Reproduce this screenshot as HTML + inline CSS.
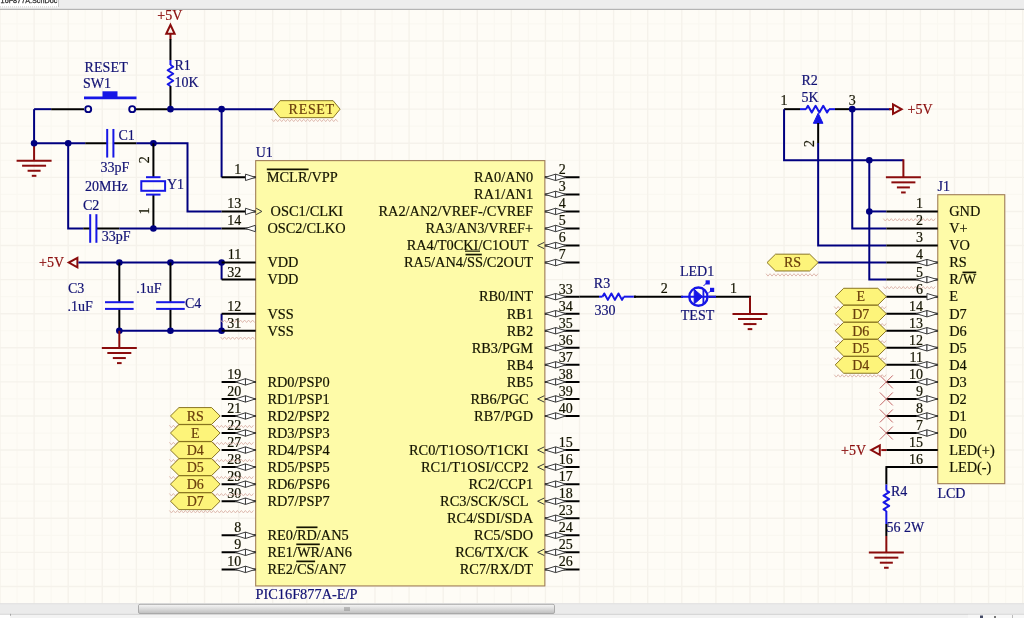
<!DOCTYPE html>
<html><head><meta charset="utf-8"><title>schematic</title>
<style>
html,body{margin:0;padding:0;}
body{width:1024px;height:618px;overflow:hidden;background:#fefcf6;font-family:"Liberation Serif",serif;}
svg{position:absolute;left:0;top:0;display:block;will-change:transform;transform:translateZ(0);}
svg text{font-family:"Liberation Serif",serif;}
.sans{font-family:"Liberation Sans",sans-serif;}
</style></head><body>
<svg width="1024" height="618" viewBox="0 0 1024 618" shape-rendering="auto">
<rect x="0" y="0" width="1024" height="618" fill="#fefcf6"/>
<path d="M17.05 9V604 M51.14 9V604 M85.23 9V604 M119.32 9V604 M153.41 9V604 M187.50 9V604 M221.59 9V604 M255.68 9V604 M289.77 9V604 M323.86 9V604 M357.95 9V604 M392.04 9V604 M426.13 9V604 M460.22 9V604 M494.31 9V604 M528.40 9V604 M562.49 9V604 M596.58 9V604 M630.67 9V604 M664.76 9V604 M698.85 9V604 M732.94 9V604 M767.03 9V604 M801.12 9V604 M835.21 9V604 M869.30 9V604 M903.39 9V604 M937.48 9V604 M971.57 9V604 M1005.66 9V604 M0 23.95H1024 M0 58.04H1024 M0 92.13H1024 M0 126.22H1024 M0 160.31H1024 M0 194.40H1024 M0 228.49H1024 M0 262.57H1024 M0 296.67H1024 M0 330.75H1024 M0 364.85H1024 M0 398.94H1024 M0 433.03H1024 M0 467.12H1024 M0 501.21H1024 M0 535.30H1024 M0 569.38H1024 M0 603.48H1024" stroke="#faf8f1" stroke-width="1.2" fill="none"/>
<path d="M0.00 9V604 M34.09 9V604 M68.18 9V604 M102.27 9V604 M136.36 9V604 M170.45 9V604 M204.54 9V604 M238.63 9V604 M272.72 9V604 M306.81 9V604 M340.90 9V604 M374.99 9V604 M409.08 9V604 M443.17 9V604 M477.26 9V604 M511.35 9V604 M545.44 9V604 M579.53 9V604 M613.62 9V604 M647.71 9V604 M681.80 9V604 M715.89 9V604 M749.98 9V604 M784.07 9V604 M818.16 9V604 M852.25 9V604 M886.34 9V604 M920.43 9V604 M954.52 9V604 M988.61 9V604 M1022.70 9V604 M0 40.99H1024 M0 75.08H1024 M0 109.17H1024 M0 143.26H1024 M0 177.35H1024 M0 211.44H1024 M0 245.53H1024 M0 279.62H1024 M0 313.71H1024 M0 347.80H1024 M0 381.89H1024 M0 415.98H1024 M0 450.07H1024 M0 484.16H1024 M0 518.25H1024 M0 552.34H1024 M0 586.43H1024" stroke="#f5f2eb" stroke-width="1.4" fill="none"/>
<rect x="255.68" y="160.61" width="289.16" height="425.32" fill="#fefba8" stroke="#a07e58" stroke-width="1.1"/>
<rect x="937.78" y="194.70" width="66.98" height="288.96" fill="#fefba8" stroke="#a07e58" stroke-width="1.1"/>
<line x1="170.45" y1="39.49" x2="170.45" y2="33.99" stroke="#8a0c0c" stroke-width="2" stroke-linecap="butt"/>
<polygon points="166.25,33.79 170.45,24.79 174.65,33.79" stroke="#8a0c0c" stroke-width="2" fill="none" stroke-linejoin="miter"/>
<text x="169.75" y="19.99" fill="#8a0c0c" stroke="#8a0c0c" stroke-width="0.2" font-size="14" text-anchor="middle" >+5V</text>
<line x1="170.45" y1="38.99" x2="170.45" y2="60.00" stroke="#000000" stroke-width="2" stroke-linecap="butt"/>
<line x1="170.45" y1="86.00" x2="170.45" y2="109.17" stroke="#000000" stroke-width="2" stroke-linecap="butt"/>
<line x1="170.45" y1="60.00" x2="170.45" y2="65.00" stroke="#1616e6" stroke-width="2" stroke-linecap="butt"/>
<polyline points="170.45,65.00 173.25,66.75 167.65,70.25 173.25,73.75 167.65,77.25 173.25,80.75 167.65,84.25 170.45,86.00" stroke="#1616e6" stroke-width="2" fill="none" stroke-linejoin="round"/>
<text x="174.50" y="69.50" fill="#121274" stroke="#121274" stroke-width="0.2" font-size="14" text-anchor="start" >R1</text>
<text x="174.50" y="86.50" fill="#121274" stroke="#121274" stroke-width="0.2" font-size="14" text-anchor="start" >10K</text>
<line x1="34.09" y1="109.17" x2="51.14" y2="109.17" stroke="#000080" stroke-width="2" stroke-linecap="butt"/>
<line x1="51.14" y1="109.17" x2="84.00" y2="109.17" stroke="#000000" stroke-width="2" stroke-linecap="butt"/>
<line x1="135.00" y1="109.17" x2="170.45" y2="109.17" stroke="#000000" stroke-width="2" stroke-linecap="butt"/>
<line x1="170.45" y1="109.17" x2="272.72" y2="109.17" stroke="#000080" stroke-width="2" stroke-linecap="butt"/>
<circle cx="88.2" cy="109.17" r="3.0" fill="#fefcf6" stroke="#000080" stroke-width="1.9"/>
<circle cx="132.2" cy="109.17" r="3.0" fill="#fefcf6" stroke="#000080" stroke-width="1.9"/>
<line x1="84.00" y1="97.80" x2="136.50" y2="97.80" stroke="#1616e6" stroke-width="2.8" stroke-linecap="butt"/>
<rect x="102.5" y="91.3" width="15" height="6" fill="#1616e6"/>
<text x="84.50" y="72.30" fill="#121274" stroke="#121274" stroke-width="0.2" font-size="14" text-anchor="start" letter-spacing="0.1">RESET</text>
<text x="83.00" y="87.50" fill="#121274" stroke="#121274" stroke-width="0.2" font-size="14" text-anchor="start" >SW1</text>
<circle cx="170.45" cy="109.17" r="3.3" fill="#000080"/>
<circle cx="221.59" cy="109.17" r="3.3" fill="#000080"/>
<polyline points="271.7,119.2 273.7,121.6 275.7,119.2 277.7,121.6 279.7,119.2 281.7,121.6 283.7,119.2 285.7,121.6 287.7,119.2 289.7,121.6 291.7,119.2 293.7,121.6 295.7,119.2 297.7,121.6 299.7,119.2 301.7,121.6 303.7,119.2 305.7,121.6 307.7,119.2 309.7,121.6 311.7,119.2 313.7,121.6 315.7,119.2 317.7,121.6 319.7,119.2 321.7,121.6 323.7,119.2 325.7,121.6 327.7,119.2 329.7,121.6 331.7,119.2 333.7,121.6 335.7,119.2 337.7,121.6" stroke="#dcb4a8" stroke-width="1" fill="none" opacity="0.9"/>
<polygon points="273.12,109.17 280.12,100.67 333.10,100.67 340.10,109.17 333.10,117.67 280.12,117.67" stroke="#7c6614" stroke-width="0.9" fill="#fdf47a" stroke-linejoin="miter"/>
<text x="288.60" y="113.97" fill="#6a3e0c" stroke="#6a3e0c" stroke-width="0.2" font-size="14" text-anchor="start" letter-spacing="0.7">RESET</text>
<polyline points="221.59,109.17 221.59,177.35" stroke="#000080" stroke-width="2" fill="none" stroke-linejoin="miter"/>
<polyline points="34.09,109.17 34.09,143.26" stroke="#000080" stroke-width="2" fill="none" stroke-linejoin="miter"/>
<line x1="34.09" y1="143.26" x2="34.09" y2="160.66" stroke="#8a0c0c" stroke-width="2" stroke-linecap="butt"/>
<line x1="16.59" y1="160.66" x2="51.59" y2="160.66" stroke="#8a0c0c" stroke-width="2" stroke-linecap="butt"/>
<line x1="22.09" y1="165.71" x2="46.09" y2="165.71" stroke="#8a0c0c" stroke-width="2" stroke-linecap="butt"/>
<line x1="27.59" y1="170.76" x2="40.59" y2="170.76" stroke="#8a0c0c" stroke-width="2" stroke-linecap="butt"/>
<line x1="31.79" y1="175.81" x2="36.39" y2="175.81" stroke="#8a0c0c" stroke-width="2" stroke-linecap="butt"/>
<circle cx="34.09" cy="143.26" r="3.3" fill="#000080"/>
<circle cx="68.18" cy="143.26" r="3.3" fill="#000080"/>
<line x1="34.09" y1="143.26" x2="85.23" y2="143.26" stroke="#000080" stroke-width="2" stroke-linecap="butt"/>
<line x1="85.23" y1="143.26" x2="107.00" y2="143.26" stroke="#000000" stroke-width="2" stroke-linecap="butt"/>
<line x1="113.50" y1="143.26" x2="136.36" y2="143.26" stroke="#000000" stroke-width="2" stroke-linecap="butt"/>
<line x1="107.20" y1="128.96" x2="107.20" y2="157.56" stroke="#1616e6" stroke-width="2" stroke-linecap="butt"/>
<line x1="113.40" y1="128.96" x2="113.40" y2="157.56" stroke="#1616e6" stroke-width="2" stroke-linecap="butt"/>
<polyline points="136.36,143.26 187.50,143.26 187.50,211.44 221.59,211.44" stroke="#000080" stroke-width="2" fill="none" stroke-linejoin="miter"/>
<circle cx="153.41" cy="143.26" r="3.3" fill="#000080"/>
<text x="118.50" y="140.20" fill="#121274" stroke="#121274" stroke-width="0.2" font-size="14" text-anchor="start" >C1</text>
<text x="100.50" y="171.60" fill="#121274" stroke="#121274" stroke-width="0.2" font-size="14" text-anchor="start" >33pF</text>
<text x="85.00" y="191.20" fill="#121274" stroke="#121274" stroke-width="0.2" font-size="14" text-anchor="start" >20MHz</text>
<text x="83.00" y="209.60" fill="#121274" stroke="#121274" stroke-width="0.2" font-size="14" text-anchor="start" >C2</text>
<text x="101.80" y="240.80" fill="#121274" stroke="#121274" stroke-width="0.2" font-size="14" text-anchor="start" >33pF</text>
<text x="167.00" y="189.00" fill="#121274" stroke="#121274" stroke-width="0.2" font-size="14" text-anchor="start" >Y1</text>
<line x1="153.41" y1="143.26" x2="153.41" y2="177.00" stroke="#000000" stroke-width="2" stroke-linecap="butt"/>
<line x1="153.41" y1="194.70" x2="153.41" y2="228.49" stroke="#000000" stroke-width="2" stroke-linecap="butt"/>
<line x1="146.00" y1="177.20" x2="160.50" y2="177.20" stroke="#1616e6" stroke-width="2" stroke-linecap="butt"/>
<line x1="146.00" y1="194.60" x2="160.50" y2="194.60" stroke="#1616e6" stroke-width="2" stroke-linecap="butt"/>
<rect x="141.3" y="181.2" width="23.8" height="9.6" fill="none" stroke="#1616e6" stroke-width="2"/>
<text transform="translate(148.80,163.20) rotate(-90)" fill="#141400" stroke="#141400" stroke-width="0.2" font-size="14">2</text>
<text transform="translate(148.80,214.50) rotate(-90)" fill="#141400" stroke="#141400" stroke-width="0.2" font-size="14">1</text>
<polyline points="68.18,143.26 68.18,228.49 83.23,228.49" stroke="#000080" stroke-width="2" fill="none" stroke-linejoin="miter"/>
<line x1="83.23" y1="228.49" x2="90.00" y2="228.49" stroke="#000000" stroke-width="2" stroke-linecap="butt"/>
<line x1="96.50" y1="228.49" x2="119.32" y2="228.49" stroke="#000000" stroke-width="2" stroke-linecap="butt"/>
<line x1="90.20" y1="214.19" x2="90.20" y2="242.79" stroke="#1616e6" stroke-width="2" stroke-linecap="butt"/>
<line x1="96.40" y1="214.19" x2="96.40" y2="242.79" stroke="#1616e6" stroke-width="2" stroke-linecap="butt"/>
<line x1="119.32" y1="228.49" x2="221.59" y2="228.49" stroke="#000080" stroke-width="2" stroke-linecap="butt"/>
<circle cx="153.41" cy="228.49" r="3.3" fill="#000080"/>
<polygon points="77.40,257.87 68.80,262.57 77.40,267.27" stroke="#8a0c0c" stroke-width="2" fill="none" stroke-linejoin="miter"/>
<text x="39.00" y="267.20" fill="#8a0c0c" stroke="#8a0c0c" stroke-width="0.2" font-size="14" text-anchor="start" >+5V</text>
<line x1="78.40" y1="262.57" x2="221.59" y2="262.57" stroke="#000080" stroke-width="2" stroke-linecap="butt"/>
<circle cx="119.32" cy="262.57" r="3.3" fill="#000080"/>
<circle cx="170.45" cy="262.57" r="3.3" fill="#000080"/>
<circle cx="221.59" cy="262.57" r="3.3" fill="#000080"/>
<line x1="221.59" y1="262.57" x2="221.59" y2="279.62" stroke="#000080" stroke-width="2" stroke-linecap="butt"/>
<line x1="119.32" y1="262.57" x2="119.32" y2="302.00" stroke="#000000" stroke-width="2" stroke-linecap="butt"/>
<line x1="119.32" y1="309.00" x2="119.32" y2="330.75" stroke="#000000" stroke-width="2" stroke-linecap="butt"/>
<line x1="105.02" y1="302.20" x2="133.62" y2="302.20" stroke="#1616e6" stroke-width="2" stroke-linecap="butt"/>
<line x1="105.02" y1="308.90" x2="133.62" y2="308.90" stroke="#1616e6" stroke-width="2" stroke-linecap="butt"/>
<line x1="170.45" y1="262.57" x2="170.45" y2="302.00" stroke="#000000" stroke-width="2" stroke-linecap="butt"/>
<line x1="170.45" y1="309.00" x2="170.45" y2="330.75" stroke="#000000" stroke-width="2" stroke-linecap="butt"/>
<line x1="156.15" y1="302.20" x2="184.75" y2="302.20" stroke="#1616e6" stroke-width="2" stroke-linecap="butt"/>
<line x1="156.15" y1="308.90" x2="184.75" y2="308.90" stroke="#1616e6" stroke-width="2" stroke-linecap="butt"/>
<line x1="119.32" y1="330.75" x2="221.59" y2="330.75" stroke="#000080" stroke-width="2" stroke-linecap="butt"/>
<line x1="221.59" y1="313.71" x2="221.59" y2="330.75" stroke="#000080" stroke-width="2" stroke-linecap="butt"/>
<circle cx="119.32" cy="330.75" r="3.3" fill="#000080"/>
<circle cx="170.45" cy="330.75" r="3.3" fill="#000080"/>
<circle cx="221.59" cy="330.75" r="3.3" fill="#000080"/>
<line x1="119.32" y1="330.75" x2="119.32" y2="347.95" stroke="#8a0c0c" stroke-width="2" stroke-linecap="butt"/>
<line x1="101.82" y1="347.95" x2="136.82" y2="347.95" stroke="#8a0c0c" stroke-width="2" stroke-linecap="butt"/>
<line x1="107.32" y1="353.00" x2="131.32" y2="353.00" stroke="#8a0c0c" stroke-width="2" stroke-linecap="butt"/>
<line x1="112.82" y1="358.05" x2="125.82" y2="358.05" stroke="#8a0c0c" stroke-width="2" stroke-linecap="butt"/>
<line x1="117.02" y1="363.10" x2="121.62" y2="363.10" stroke="#8a0c0c" stroke-width="2" stroke-linecap="butt"/>
<text x="68.00" y="292.70" fill="#121274" stroke="#121274" stroke-width="0.2" font-size="14" text-anchor="start" >C3</text>
<text x="67.50" y="311.00" fill="#121274" stroke="#121274" stroke-width="0.2" font-size="14" text-anchor="start" >.1uF</text>
<text x="136.30" y="292.70" fill="#121274" stroke="#121274" stroke-width="0.2" font-size="14" text-anchor="start" >.1uF</text>
<text x="185.00" y="308.30" fill="#121274" stroke="#121274" stroke-width="0.2" font-size="14" text-anchor="start" >C4</text>
<polyline points="220.6,320.1 222.6,322.5 224.6,320.1 226.6,322.5 228.6,320.1 230.6,322.5 232.6,320.1 234.6,322.5 236.6,320.1 238.6,322.5 240.6,320.1 242.6,322.5 244.6,320.1 246.6,322.5 248.6,320.1 250.6,322.5 252.6,320.1 254.6,322.5" stroke="#dcb4a8" stroke-width="1" fill="none" opacity="0.9"/>
<polyline points="220.6,337.0 222.6,339.4 224.6,337.0 226.6,339.4 228.6,337.0 230.6,339.4 232.6,337.0 234.6,339.4 236.6,337.0 238.6,339.4 240.6,337.0 242.6,339.4 244.6,337.0 246.6,339.4 248.6,337.0 250.6,339.4 252.6,337.0 254.6,339.4" stroke="#dcb4a8" stroke-width="1" fill="none" opacity="0.9"/>
<text x="255.68" y="156.80" fill="#121274" stroke="#121274" stroke-width="0.2" font-size="14" text-anchor="start" >U1</text>
<text x="255.48" y="598.80" fill="#121274" stroke="#121274" stroke-width="0.2" font-size="14.35" text-anchor="start" >PIC16F877A-E/P</text>
<line x1="221.59" y1="177.35" x2="255.68" y2="177.35" stroke="#000000" stroke-width="2" stroke-linecap="butt"/>
<polygon points="245.48,174.15 255.38,177.35 245.48,180.55" stroke="#3c3c3c" stroke-width="1" fill="#ffffff" stroke-linejoin="miter"/>
<text x="241.20" y="174.25" fill="#141400" stroke="#141400" stroke-width="0.2" font-size="14" text-anchor="end" >1</text>
<text x="266.80" y="182.15" fill="#141400" stroke="#141400" stroke-width="0.2" font-size="14.35" text-anchor="start" >MCLR/VPP</text>
<line x1="266.80" y1="169.35" x2="308.60" y2="169.35" stroke="#141400" stroke-width="1.7" stroke-linecap="butt"/>
<line x1="221.59" y1="211.44" x2="255.68" y2="211.44" stroke="#000000" stroke-width="2" stroke-linecap="butt"/>
<polygon points="245.48,208.24 255.38,211.44 245.48,214.64" stroke="#3c3c3c" stroke-width="1" fill="#ffffff" stroke-linejoin="miter"/>
<polyline points="256.18,208.24 261.88,211.44 256.18,214.64" stroke="#3c3c3c" stroke-width="1" fill="none" stroke-linejoin="miter"/>
<text x="241.20" y="208.34" fill="#141400" stroke="#141400" stroke-width="0.2" font-size="14" text-anchor="end" >13</text>
<text x="270.60" y="216.24" fill="#141400" stroke="#141400" stroke-width="0.2" font-size="14.35" text-anchor="start" >OSC1/CLKI</text>
<line x1="221.59" y1="228.49" x2="255.68" y2="228.49" stroke="#000000" stroke-width="2" stroke-linecap="butt"/>
<polygon points="255.38,225.29 245.48,228.49 255.38,231.69" stroke="#3c3c3c" stroke-width="1" fill="#ffffff" stroke-linejoin="miter"/>
<text x="241.20" y="225.39" fill="#141400" stroke="#141400" stroke-width="0.2" font-size="14" text-anchor="end" >14</text>
<text x="267.40" y="233.29" fill="#141400" stroke="#141400" stroke-width="0.2" font-size="14.35" text-anchor="start" >OSC2/CLKO</text>
<line x1="221.59" y1="262.57" x2="255.68" y2="262.57" stroke="#000000" stroke-width="2" stroke-linecap="butt"/>
<text x="241.20" y="259.47" fill="#141400" stroke="#141400" stroke-width="0.2" font-size="14" text-anchor="end" >11</text>
<text x="267.40" y="267.37" fill="#141400" stroke="#141400" stroke-width="0.2" font-size="14.35" text-anchor="start" >VDD</text>
<line x1="221.59" y1="279.62" x2="255.68" y2="279.62" stroke="#000000" stroke-width="2" stroke-linecap="butt"/>
<text x="241.20" y="276.52" fill="#141400" stroke="#141400" stroke-width="0.2" font-size="14" text-anchor="end" >32</text>
<text x="267.40" y="284.42" fill="#141400" stroke="#141400" stroke-width="0.2" font-size="14.35" text-anchor="start" >VDD</text>
<line x1="221.59" y1="313.71" x2="255.68" y2="313.71" stroke="#000000" stroke-width="2" stroke-linecap="butt"/>
<text x="241.20" y="310.61" fill="#141400" stroke="#141400" stroke-width="0.2" font-size="14" text-anchor="end" >12</text>
<text x="267.40" y="318.51" fill="#141400" stroke="#141400" stroke-width="0.2" font-size="14.35" text-anchor="start" >VSS</text>
<line x1="221.59" y1="330.75" x2="255.68" y2="330.75" stroke="#000000" stroke-width="2" stroke-linecap="butt"/>
<text x="241.20" y="327.65" fill="#141400" stroke="#141400" stroke-width="0.2" font-size="14" text-anchor="end" >31</text>
<text x="267.40" y="335.55" fill="#141400" stroke="#141400" stroke-width="0.2" font-size="14.35" text-anchor="start" >VSS</text>
<line x1="221.59" y1="381.89" x2="255.68" y2="381.89" stroke="#000000" stroke-width="2" stroke-linecap="butt"/>
<polygon points="245.48,378.69 235.38,381.89 245.48,385.09" stroke="#3c3c3c" stroke-width="1" fill="#ffffff" stroke-linejoin="miter"/>
<polygon points="245.48,378.69 255.38,381.89 245.48,385.09" stroke="#3c3c3c" stroke-width="1" fill="#ffffff" stroke-linejoin="miter"/>
<text x="241.20" y="378.79" fill="#141400" stroke="#141400" stroke-width="0.2" font-size="14" text-anchor="end" >19</text>
<text x="267.40" y="386.69" fill="#141400" stroke="#141400" stroke-width="0.2" font-size="14.35" text-anchor="start" >RD0/PSP0</text>
<line x1="221.59" y1="398.94" x2="255.68" y2="398.94" stroke="#000000" stroke-width="2" stroke-linecap="butt"/>
<polygon points="245.48,395.74 235.38,398.94 245.48,402.14" stroke="#3c3c3c" stroke-width="1" fill="#ffffff" stroke-linejoin="miter"/>
<polygon points="245.48,395.74 255.38,398.94 245.48,402.14" stroke="#3c3c3c" stroke-width="1" fill="#ffffff" stroke-linejoin="miter"/>
<text x="241.20" y="395.84" fill="#141400" stroke="#141400" stroke-width="0.2" font-size="14" text-anchor="end" >20</text>
<text x="267.40" y="403.74" fill="#141400" stroke="#141400" stroke-width="0.2" font-size="14.35" text-anchor="start" >RD1/PSP1</text>
<line x1="221.59" y1="415.98" x2="255.68" y2="415.98" stroke="#000000" stroke-width="2" stroke-linecap="butt"/>
<polygon points="245.48,412.78 235.38,415.98 245.48,419.18" stroke="#3c3c3c" stroke-width="1" fill="#ffffff" stroke-linejoin="miter"/>
<polygon points="245.48,412.78 255.38,415.98 245.48,419.18" stroke="#3c3c3c" stroke-width="1" fill="#ffffff" stroke-linejoin="miter"/>
<text x="241.20" y="412.88" fill="#141400" stroke="#141400" stroke-width="0.2" font-size="14" text-anchor="end" >21</text>
<text x="267.40" y="420.78" fill="#141400" stroke="#141400" stroke-width="0.2" font-size="14.35" text-anchor="start" >RD2/PSP2</text>
<line x1="221.59" y1="433.03" x2="255.68" y2="433.03" stroke="#000000" stroke-width="2" stroke-linecap="butt"/>
<polygon points="245.48,429.83 235.38,433.03 245.48,436.23" stroke="#3c3c3c" stroke-width="1" fill="#ffffff" stroke-linejoin="miter"/>
<polygon points="245.48,429.83 255.38,433.03 245.48,436.23" stroke="#3c3c3c" stroke-width="1" fill="#ffffff" stroke-linejoin="miter"/>
<text x="241.20" y="429.93" fill="#141400" stroke="#141400" stroke-width="0.2" font-size="14" text-anchor="end" >22</text>
<text x="267.40" y="437.83" fill="#141400" stroke="#141400" stroke-width="0.2" font-size="14.35" text-anchor="start" >RD3/PSP3</text>
<line x1="221.59" y1="450.07" x2="255.68" y2="450.07" stroke="#000000" stroke-width="2" stroke-linecap="butt"/>
<polygon points="245.48,446.87 235.38,450.07 245.48,453.27" stroke="#3c3c3c" stroke-width="1" fill="#ffffff" stroke-linejoin="miter"/>
<polygon points="245.48,446.87 255.38,450.07 245.48,453.27" stroke="#3c3c3c" stroke-width="1" fill="#ffffff" stroke-linejoin="miter"/>
<text x="241.20" y="446.97" fill="#141400" stroke="#141400" stroke-width="0.2" font-size="14" text-anchor="end" >27</text>
<text x="267.40" y="454.87" fill="#141400" stroke="#141400" stroke-width="0.2" font-size="14.35" text-anchor="start" >RD4/PSP4</text>
<line x1="221.59" y1="467.12" x2="255.68" y2="467.12" stroke="#000000" stroke-width="2" stroke-linecap="butt"/>
<polygon points="245.48,463.92 235.38,467.12 245.48,470.32" stroke="#3c3c3c" stroke-width="1" fill="#ffffff" stroke-linejoin="miter"/>
<polygon points="245.48,463.92 255.38,467.12 245.48,470.32" stroke="#3c3c3c" stroke-width="1" fill="#ffffff" stroke-linejoin="miter"/>
<text x="241.20" y="464.02" fill="#141400" stroke="#141400" stroke-width="0.2" font-size="14" text-anchor="end" >28</text>
<text x="267.40" y="471.92" fill="#141400" stroke="#141400" stroke-width="0.2" font-size="14.35" text-anchor="start" >RD5/PSP5</text>
<line x1="221.59" y1="484.16" x2="255.68" y2="484.16" stroke="#000000" stroke-width="2" stroke-linecap="butt"/>
<polygon points="245.48,480.96 235.38,484.16 245.48,487.36" stroke="#3c3c3c" stroke-width="1" fill="#ffffff" stroke-linejoin="miter"/>
<polygon points="245.48,480.96 255.38,484.16 245.48,487.36" stroke="#3c3c3c" stroke-width="1" fill="#ffffff" stroke-linejoin="miter"/>
<text x="241.20" y="481.06" fill="#141400" stroke="#141400" stroke-width="0.2" font-size="14" text-anchor="end" >29</text>
<text x="267.40" y="488.96" fill="#141400" stroke="#141400" stroke-width="0.2" font-size="14.35" text-anchor="start" >RD6/PSP6</text>
<line x1="221.59" y1="501.21" x2="255.68" y2="501.21" stroke="#000000" stroke-width="2" stroke-linecap="butt"/>
<polygon points="245.48,498.01 235.38,501.21 245.48,504.41" stroke="#3c3c3c" stroke-width="1" fill="#ffffff" stroke-linejoin="miter"/>
<polygon points="245.48,498.01 255.38,501.21 245.48,504.41" stroke="#3c3c3c" stroke-width="1" fill="#ffffff" stroke-linejoin="miter"/>
<text x="241.20" y="498.11" fill="#141400" stroke="#141400" stroke-width="0.2" font-size="14" text-anchor="end" >30</text>
<text x="267.40" y="506.01" fill="#141400" stroke="#141400" stroke-width="0.2" font-size="14.35" text-anchor="start" >RD7/PSP7</text>
<line x1="221.59" y1="535.30" x2="255.68" y2="535.30" stroke="#000000" stroke-width="2" stroke-linecap="butt"/>
<polygon points="245.48,532.10 235.38,535.30 245.48,538.50" stroke="#3c3c3c" stroke-width="1" fill="#ffffff" stroke-linejoin="miter"/>
<polygon points="245.48,532.10 255.38,535.30 245.48,538.50" stroke="#3c3c3c" stroke-width="1" fill="#ffffff" stroke-linejoin="miter"/>
<text x="241.20" y="532.20" fill="#141400" stroke="#141400" stroke-width="0.2" font-size="14" text-anchor="end" >8</text>
<text x="267.40" y="540.10" fill="#141400" stroke="#141400" stroke-width="0.2" font-size="14.35" text-anchor="start" id="t_8">RE0/RD/AN5</text>
<line x1="296.30" y1="527.30" x2="317.50" y2="527.30" stroke="#141400" stroke-width="1.7" stroke-linecap="butt"/>
<line x1="221.59" y1="552.34" x2="255.68" y2="552.34" stroke="#000000" stroke-width="2" stroke-linecap="butt"/>
<polygon points="245.48,549.14 235.38,552.34 245.48,555.54" stroke="#3c3c3c" stroke-width="1" fill="#ffffff" stroke-linejoin="miter"/>
<polygon points="245.48,549.14 255.38,552.34 245.48,555.54" stroke="#3c3c3c" stroke-width="1" fill="#ffffff" stroke-linejoin="miter"/>
<text x="241.20" y="549.24" fill="#141400" stroke="#141400" stroke-width="0.2" font-size="14" text-anchor="end" >9</text>
<text x="267.40" y="557.14" fill="#141400" stroke="#141400" stroke-width="0.2" font-size="14.35" text-anchor="start" id="t_9">RE1/WR/AN6</text>
<line x1="296.30" y1="544.34" x2="319.80" y2="544.34" stroke="#141400" stroke-width="1.7" stroke-linecap="butt"/>
<line x1="221.59" y1="569.38" x2="255.68" y2="569.38" stroke="#000000" stroke-width="2" stroke-linecap="butt"/>
<polygon points="245.48,566.18 235.38,569.38 245.48,572.58" stroke="#3c3c3c" stroke-width="1" fill="#ffffff" stroke-linejoin="miter"/>
<polygon points="245.48,566.18 255.38,569.38 245.48,572.58" stroke="#3c3c3c" stroke-width="1" fill="#ffffff" stroke-linejoin="miter"/>
<text x="241.20" y="566.28" fill="#141400" stroke="#141400" stroke-width="0.2" font-size="14" text-anchor="end" >10</text>
<text x="267.40" y="574.18" fill="#141400" stroke="#141400" stroke-width="0.2" font-size="14.35" text-anchor="start" id="t_10">RE2/CS/AN7</text>
<line x1="296.30" y1="561.38" x2="315.10" y2="561.38" stroke="#141400" stroke-width="1.7" stroke-linecap="butt"/>
<line x1="544.84" y1="177.35" x2="579.53" y2="177.35" stroke="#000000" stroke-width="2" stroke-linecap="butt"/>
<polygon points="555.64,174.15 545.14,177.35 555.64,180.55" stroke="#3c3c3c" stroke-width="1" fill="#ffffff" stroke-linejoin="miter"/>
<polygon points="555.64,174.15 565.84,177.35 555.64,180.55" stroke="#3c3c3c" stroke-width="1" fill="#ffffff" stroke-linejoin="miter"/>
<text x="558.80" y="174.25" fill="#141400" stroke="#141400" stroke-width="0.2" font-size="14" text-anchor="start" >2</text>
<text x="533.10" y="182.15" fill="#141400" stroke="#141400" stroke-width="0.2" font-size="14.35" text-anchor="end" id="r_2">RA0/AN0</text>
<line x1="544.84" y1="194.40" x2="579.53" y2="194.40" stroke="#000000" stroke-width="2" stroke-linecap="butt"/>
<polygon points="555.64,191.20 545.14,194.40 555.64,197.60" stroke="#3c3c3c" stroke-width="1" fill="#ffffff" stroke-linejoin="miter"/>
<polygon points="555.64,191.20 565.84,194.40 555.64,197.60" stroke="#3c3c3c" stroke-width="1" fill="#ffffff" stroke-linejoin="miter"/>
<text x="558.80" y="191.30" fill="#141400" stroke="#141400" stroke-width="0.2" font-size="14" text-anchor="start" >3</text>
<text x="533.10" y="199.20" fill="#141400" stroke="#141400" stroke-width="0.2" font-size="14.35" text-anchor="end" id="r_3">RA1/AN1</text>
<line x1="544.84" y1="211.44" x2="579.53" y2="211.44" stroke="#000000" stroke-width="2" stroke-linecap="butt"/>
<polygon points="555.64,208.24 545.14,211.44 555.64,214.64" stroke="#3c3c3c" stroke-width="1" fill="#ffffff" stroke-linejoin="miter"/>
<polygon points="555.64,208.24 565.84,211.44 555.64,214.64" stroke="#3c3c3c" stroke-width="1" fill="#ffffff" stroke-linejoin="miter"/>
<text x="558.80" y="208.34" fill="#141400" stroke="#141400" stroke-width="0.2" font-size="14" text-anchor="start" >4</text>
<text x="533.10" y="216.24" fill="#141400" stroke="#141400" stroke-width="0.2" font-size="14.35" text-anchor="end" id="r_4">RA2/AN2/VREF-/CVREF</text>
<line x1="544.84" y1="228.49" x2="579.53" y2="228.49" stroke="#000000" stroke-width="2" stroke-linecap="butt"/>
<polygon points="555.64,225.29 545.14,228.49 555.64,231.69" stroke="#3c3c3c" stroke-width="1" fill="#ffffff" stroke-linejoin="miter"/>
<polygon points="555.64,225.29 565.84,228.49 555.64,231.69" stroke="#3c3c3c" stroke-width="1" fill="#ffffff" stroke-linejoin="miter"/>
<text x="558.80" y="225.39" fill="#141400" stroke="#141400" stroke-width="0.2" font-size="14" text-anchor="start" >5</text>
<text x="533.10" y="233.29" fill="#141400" stroke="#141400" stroke-width="0.2" font-size="14.35" text-anchor="end" id="r_5">RA3/AN3/VREF+</text>
<line x1="544.84" y1="245.53" x2="579.53" y2="245.53" stroke="#000000" stroke-width="2" stroke-linecap="butt"/>
<polygon points="555.64,242.33 545.14,245.53 555.64,248.73" stroke="#3c3c3c" stroke-width="1" fill="#ffffff" stroke-linejoin="miter"/>
<polygon points="555.64,242.33 565.84,245.53 555.64,248.73" stroke="#3c3c3c" stroke-width="1" fill="#ffffff" stroke-linejoin="miter"/>
<polyline points="544.34,242.33 537.64,245.53 544.34,248.73" stroke="#3c3c3c" stroke-width="1" fill="none" stroke-linejoin="miter"/>
<text x="558.80" y="242.43" fill="#141400" stroke="#141400" stroke-width="0.2" font-size="14" text-anchor="start" >6</text>
<text x="528.60" y="250.33" fill="#141400" stroke="#141400" stroke-width="0.2" font-size="14.35" text-anchor="end" id="r_6">RA4/T0CKI/C1OUT</text>
<line x1="465.00" y1="251.13" x2="480.00" y2="251.13" stroke="#141400" stroke-width="1.2" stroke-linecap="butt"/>
<line x1="544.84" y1="262.57" x2="579.53" y2="262.57" stroke="#000000" stroke-width="2" stroke-linecap="butt"/>
<polygon points="555.64,259.37 545.14,262.57 555.64,265.77" stroke="#3c3c3c" stroke-width="1" fill="#ffffff" stroke-linejoin="miter"/>
<polygon points="555.64,259.37 565.84,262.57 555.64,265.77" stroke="#3c3c3c" stroke-width="1" fill="#ffffff" stroke-linejoin="miter"/>
<text x="558.80" y="259.47" fill="#141400" stroke="#141400" stroke-width="0.2" font-size="14" text-anchor="start" >7</text>
<text x="533.10" y="267.37" fill="#141400" stroke="#141400" stroke-width="0.2" font-size="14.35" text-anchor="end" id="r_7">RA5/AN4/SS/C2OUT</text>
<line x1="465.50" y1="254.57" x2="481.80" y2="254.57" stroke="#141400" stroke-width="1.7" stroke-linecap="butt"/>
<line x1="544.84" y1="296.67" x2="579.53" y2="296.67" stroke="#000000" stroke-width="2" stroke-linecap="butt"/>
<polygon points="555.64,293.47 545.14,296.67 555.64,299.87" stroke="#3c3c3c" stroke-width="1" fill="#ffffff" stroke-linejoin="miter"/>
<polygon points="555.64,293.47 565.84,296.67 555.64,299.87" stroke="#3c3c3c" stroke-width="1" fill="#ffffff" stroke-linejoin="miter"/>
<text x="558.80" y="293.57" fill="#141400" stroke="#141400" stroke-width="0.2" font-size="14" text-anchor="start" >33</text>
<text x="533.10" y="301.47" fill="#141400" stroke="#141400" stroke-width="0.2" font-size="14.35" text-anchor="end" id="r_33">RB0/INT</text>
<line x1="544.84" y1="313.71" x2="579.53" y2="313.71" stroke="#000000" stroke-width="2" stroke-linecap="butt"/>
<polygon points="555.64,310.51 545.14,313.71 555.64,316.91" stroke="#3c3c3c" stroke-width="1" fill="#ffffff" stroke-linejoin="miter"/>
<polygon points="555.64,310.51 565.84,313.71 555.64,316.91" stroke="#3c3c3c" stroke-width="1" fill="#ffffff" stroke-linejoin="miter"/>
<text x="558.80" y="310.61" fill="#141400" stroke="#141400" stroke-width="0.2" font-size="14" text-anchor="start" >34</text>
<text x="533.10" y="318.51" fill="#141400" stroke="#141400" stroke-width="0.2" font-size="14.35" text-anchor="end" id="r_34">RB1</text>
<line x1="544.84" y1="330.75" x2="579.53" y2="330.75" stroke="#000000" stroke-width="2" stroke-linecap="butt"/>
<polygon points="555.64,327.55 545.14,330.75 555.64,333.95" stroke="#3c3c3c" stroke-width="1" fill="#ffffff" stroke-linejoin="miter"/>
<polygon points="555.64,327.55 565.84,330.75 555.64,333.95" stroke="#3c3c3c" stroke-width="1" fill="#ffffff" stroke-linejoin="miter"/>
<text x="558.80" y="327.65" fill="#141400" stroke="#141400" stroke-width="0.2" font-size="14" text-anchor="start" >35</text>
<text x="533.10" y="335.55" fill="#141400" stroke="#141400" stroke-width="0.2" font-size="14.35" text-anchor="end" id="r_35">RB2</text>
<line x1="544.84" y1="347.80" x2="579.53" y2="347.80" stroke="#000000" stroke-width="2" stroke-linecap="butt"/>
<polygon points="555.64,344.60 545.14,347.80 555.64,351.00" stroke="#3c3c3c" stroke-width="1" fill="#ffffff" stroke-linejoin="miter"/>
<polygon points="555.64,344.60 565.84,347.80 555.64,351.00" stroke="#3c3c3c" stroke-width="1" fill="#ffffff" stroke-linejoin="miter"/>
<text x="558.80" y="344.70" fill="#141400" stroke="#141400" stroke-width="0.2" font-size="14" text-anchor="start" >36</text>
<text x="533.10" y="352.60" fill="#141400" stroke="#141400" stroke-width="0.2" font-size="14.35" text-anchor="end" id="r_36">RB3/PGM</text>
<line x1="544.84" y1="364.85" x2="579.53" y2="364.85" stroke="#000000" stroke-width="2" stroke-linecap="butt"/>
<polygon points="555.64,361.65 545.14,364.85 555.64,368.05" stroke="#3c3c3c" stroke-width="1" fill="#ffffff" stroke-linejoin="miter"/>
<polygon points="555.64,361.65 565.84,364.85 555.64,368.05" stroke="#3c3c3c" stroke-width="1" fill="#ffffff" stroke-linejoin="miter"/>
<text x="558.80" y="361.75" fill="#141400" stroke="#141400" stroke-width="0.2" font-size="14" text-anchor="start" >37</text>
<text x="533.10" y="369.65" fill="#141400" stroke="#141400" stroke-width="0.2" font-size="14.35" text-anchor="end" id="r_37">RB4</text>
<line x1="544.84" y1="381.89" x2="579.53" y2="381.89" stroke="#000000" stroke-width="2" stroke-linecap="butt"/>
<polygon points="555.64,378.69 545.14,381.89 555.64,385.09" stroke="#3c3c3c" stroke-width="1" fill="#ffffff" stroke-linejoin="miter"/>
<polygon points="555.64,378.69 565.84,381.89 555.64,385.09" stroke="#3c3c3c" stroke-width="1" fill="#ffffff" stroke-linejoin="miter"/>
<text x="558.80" y="378.79" fill="#141400" stroke="#141400" stroke-width="0.2" font-size="14" text-anchor="start" >38</text>
<text x="533.10" y="386.69" fill="#141400" stroke="#141400" stroke-width="0.2" font-size="14.35" text-anchor="end" id="r_38">RB5</text>
<line x1="544.84" y1="398.94" x2="579.53" y2="398.94" stroke="#000000" stroke-width="2" stroke-linecap="butt"/>
<polygon points="555.64,395.74 545.14,398.94 555.64,402.14" stroke="#3c3c3c" stroke-width="1" fill="#ffffff" stroke-linejoin="miter"/>
<polygon points="555.64,395.74 565.84,398.94 555.64,402.14" stroke="#3c3c3c" stroke-width="1" fill="#ffffff" stroke-linejoin="miter"/>
<polyline points="544.34,395.74 537.64,398.94 544.34,402.14" stroke="#3c3c3c" stroke-width="1" fill="none" stroke-linejoin="miter"/>
<text x="558.80" y="395.84" fill="#141400" stroke="#141400" stroke-width="0.2" font-size="14" text-anchor="start" >39</text>
<text x="528.60" y="403.74" fill="#141400" stroke="#141400" stroke-width="0.2" font-size="14.35" text-anchor="end" id="r_39">RB6/PGC</text>
<line x1="544.84" y1="415.98" x2="579.53" y2="415.98" stroke="#000000" stroke-width="2" stroke-linecap="butt"/>
<polygon points="555.64,412.78 545.14,415.98 555.64,419.18" stroke="#3c3c3c" stroke-width="1" fill="#ffffff" stroke-linejoin="miter"/>
<polygon points="555.64,412.78 565.84,415.98 555.64,419.18" stroke="#3c3c3c" stroke-width="1" fill="#ffffff" stroke-linejoin="miter"/>
<text x="558.80" y="412.88" fill="#141400" stroke="#141400" stroke-width="0.2" font-size="14" text-anchor="start" >40</text>
<text x="533.10" y="420.78" fill="#141400" stroke="#141400" stroke-width="0.2" font-size="14.35" text-anchor="end" id="r_40">RB7/PGD</text>
<line x1="544.84" y1="450.07" x2="579.53" y2="450.07" stroke="#000000" stroke-width="2" stroke-linecap="butt"/>
<polygon points="555.64,446.87 545.14,450.07 555.64,453.27" stroke="#3c3c3c" stroke-width="1" fill="#ffffff" stroke-linejoin="miter"/>
<polygon points="555.64,446.87 565.84,450.07 555.64,453.27" stroke="#3c3c3c" stroke-width="1" fill="#ffffff" stroke-linejoin="miter"/>
<polyline points="544.34,446.87 537.64,450.07 544.34,453.27" stroke="#3c3c3c" stroke-width="1" fill="none" stroke-linejoin="miter"/>
<text x="558.80" y="446.97" fill="#141400" stroke="#141400" stroke-width="0.2" font-size="14" text-anchor="start" >15</text>
<text x="528.60" y="454.87" fill="#141400" stroke="#141400" stroke-width="0.2" font-size="14.35" text-anchor="end" id="r_15">RC0/T1OSO/T1CKI</text>
<line x1="544.84" y1="467.12" x2="579.53" y2="467.12" stroke="#000000" stroke-width="2" stroke-linecap="butt"/>
<polygon points="555.64,463.92 545.14,467.12 555.64,470.32" stroke="#3c3c3c" stroke-width="1" fill="#ffffff" stroke-linejoin="miter"/>
<polygon points="555.64,463.92 565.84,467.12 555.64,470.32" stroke="#3c3c3c" stroke-width="1" fill="#ffffff" stroke-linejoin="miter"/>
<polyline points="544.34,463.92 537.64,467.12 544.34,470.32" stroke="#3c3c3c" stroke-width="1" fill="none" stroke-linejoin="miter"/>
<text x="558.80" y="464.02" fill="#141400" stroke="#141400" stroke-width="0.2" font-size="14" text-anchor="start" >16</text>
<text x="528.60" y="471.92" fill="#141400" stroke="#141400" stroke-width="0.2" font-size="14.35" text-anchor="end" id="r_16">RC1/T1OSI/CCP2</text>
<line x1="544.84" y1="484.16" x2="579.53" y2="484.16" stroke="#000000" stroke-width="2" stroke-linecap="butt"/>
<polygon points="555.64,480.96 545.14,484.16 555.64,487.36" stroke="#3c3c3c" stroke-width="1" fill="#ffffff" stroke-linejoin="miter"/>
<polygon points="555.64,480.96 565.84,484.16 555.64,487.36" stroke="#3c3c3c" stroke-width="1" fill="#ffffff" stroke-linejoin="miter"/>
<text x="558.80" y="481.06" fill="#141400" stroke="#141400" stroke-width="0.2" font-size="14" text-anchor="start" >17</text>
<text x="533.10" y="488.96" fill="#141400" stroke="#141400" stroke-width="0.2" font-size="14.35" text-anchor="end" id="r_17">RC2/CCP1</text>
<line x1="544.84" y1="501.21" x2="579.53" y2="501.21" stroke="#000000" stroke-width="2" stroke-linecap="butt"/>
<polygon points="555.64,498.01 545.14,501.21 555.64,504.41" stroke="#3c3c3c" stroke-width="1" fill="#ffffff" stroke-linejoin="miter"/>
<polygon points="555.64,498.01 565.84,501.21 555.64,504.41" stroke="#3c3c3c" stroke-width="1" fill="#ffffff" stroke-linejoin="miter"/>
<polyline points="544.34,498.01 537.64,501.21 544.34,504.41" stroke="#3c3c3c" stroke-width="1" fill="none" stroke-linejoin="miter"/>
<text x="558.80" y="498.11" fill="#141400" stroke="#141400" stroke-width="0.2" font-size="14" text-anchor="start" >18</text>
<text x="528.60" y="506.01" fill="#141400" stroke="#141400" stroke-width="0.2" font-size="14.35" text-anchor="end" id="r_18">RC3/SCK/SCL</text>
<line x1="544.84" y1="518.25" x2="579.53" y2="518.25" stroke="#000000" stroke-width="2" stroke-linecap="butt"/>
<polygon points="555.64,515.05 545.14,518.25 555.64,521.45" stroke="#3c3c3c" stroke-width="1" fill="#ffffff" stroke-linejoin="miter"/>
<polygon points="555.64,515.05 565.84,518.25 555.64,521.45" stroke="#3c3c3c" stroke-width="1" fill="#ffffff" stroke-linejoin="miter"/>
<text x="558.80" y="515.15" fill="#141400" stroke="#141400" stroke-width="0.2" font-size="14" text-anchor="start" >23</text>
<text x="533.10" y="523.05" fill="#141400" stroke="#141400" stroke-width="0.2" font-size="14.35" text-anchor="end" id="r_23">RC4/SDI/SDA</text>
<line x1="544.84" y1="535.30" x2="579.53" y2="535.30" stroke="#000000" stroke-width="2" stroke-linecap="butt"/>
<polygon points="555.64,532.10 545.14,535.30 555.64,538.50" stroke="#3c3c3c" stroke-width="1" fill="#ffffff" stroke-linejoin="miter"/>
<polygon points="555.64,532.10 565.84,535.30 555.64,538.50" stroke="#3c3c3c" stroke-width="1" fill="#ffffff" stroke-linejoin="miter"/>
<text x="558.80" y="532.20" fill="#141400" stroke="#141400" stroke-width="0.2" font-size="14" text-anchor="start" >24</text>
<text x="533.10" y="540.10" fill="#141400" stroke="#141400" stroke-width="0.2" font-size="14.35" text-anchor="end" id="r_24">RC5/SDO</text>
<line x1="544.84" y1="552.34" x2="579.53" y2="552.34" stroke="#000000" stroke-width="2" stroke-linecap="butt"/>
<polygon points="555.64,549.14 545.14,552.34 555.64,555.54" stroke="#3c3c3c" stroke-width="1" fill="#ffffff" stroke-linejoin="miter"/>
<polygon points="555.64,549.14 565.84,552.34 555.64,555.54" stroke="#3c3c3c" stroke-width="1" fill="#ffffff" stroke-linejoin="miter"/>
<polyline points="544.34,549.14 537.64,552.34 544.34,555.54" stroke="#3c3c3c" stroke-width="1" fill="none" stroke-linejoin="miter"/>
<text x="558.80" y="549.24" fill="#141400" stroke="#141400" stroke-width="0.2" font-size="14" text-anchor="start" >25</text>
<text x="528.60" y="557.14" fill="#141400" stroke="#141400" stroke-width="0.2" font-size="14.35" text-anchor="end" id="r_25">RC6/TX/CK</text>
<line x1="544.84" y1="569.38" x2="579.53" y2="569.38" stroke="#000000" stroke-width="2" stroke-linecap="butt"/>
<polygon points="555.64,566.18 545.14,569.38 555.64,572.58" stroke="#3c3c3c" stroke-width="1" fill="#ffffff" stroke-linejoin="miter"/>
<polygon points="555.64,566.18 565.84,569.38 555.64,572.58" stroke="#3c3c3c" stroke-width="1" fill="#ffffff" stroke-linejoin="miter"/>
<text x="558.80" y="566.28" fill="#141400" stroke="#141400" stroke-width="0.2" font-size="14" text-anchor="start" >26</text>
<text x="533.10" y="574.18" fill="#141400" stroke="#141400" stroke-width="0.2" font-size="14.35" text-anchor="end" id="r_26">RC7/RX/DT</text>
<line x1="579.53" y1="296.67" x2="599.00" y2="296.67" stroke="#000000" stroke-width="2" stroke-linecap="butt"/>
<line x1="633.80" y1="296.67" x2="636.00" y2="296.67" stroke="#000000" stroke-width="2" stroke-linecap="butt"/>
<line x1="599.00" y1="296.67" x2="602.50" y2="296.67" stroke="#1616e6" stroke-width="2" stroke-linecap="butt"/>
<line x1="623.80" y1="296.67" x2="633.80" y2="296.67" stroke="#1616e6" stroke-width="2" stroke-linecap="butt"/>
<polyline points="602.50,296.67 604.27,293.47 607.83,299.87 611.38,293.47 614.92,299.87 618.47,293.47 622.02,299.87 623.80,296.67" stroke="#1616e6" stroke-width="2" fill="none" stroke-linejoin="round"/>
<text x="593.80" y="287.70" fill="#121274" stroke="#121274" stroke-width="0.2" font-size="14" text-anchor="start" >R3</text>
<text x="594.50" y="314.50" fill="#121274" stroke="#121274" stroke-width="0.2" font-size="14" text-anchor="start" >330</text>
<line x1="634.00" y1="296.67" x2="683.00" y2="296.67" stroke="#000000" stroke-width="2" stroke-linecap="butt"/>
<line x1="709.00" y1="296.67" x2="750.98" y2="296.67" stroke="#000000" stroke-width="2" stroke-linecap="butt"/>
<text x="660.70" y="292.70" fill="#141400" stroke="#141400" stroke-width="0.2" font-size="14" text-anchor="start" >2</text>
<text x="730.00" y="292.70" fill="#141400" stroke="#141400" stroke-width="0.2" font-size="14" text-anchor="start" >1</text>
<line x1="681.00" y1="296.67" x2="716.00" y2="296.67" stroke="#1616e6" stroke-width="2" stroke-linecap="butt"/>
<circle cx="698.4" cy="296.67" r="9.1" fill="none" stroke="#1616e6" stroke-width="2.4"/>
<polygon points="694.20,289.37 702.60,296.67 694.20,303.97" stroke="#1616e6" stroke-width="1" fill="#1616e6" stroke-linejoin="miter"/>
<line x1="703.40" y1="289.67" x2="703.40" y2="303.67" stroke="#1616e6" stroke-width="1.8" stroke-linecap="butt"/>
<rect x="705.6" y="280.3" width="4.2" height="4.2" fill="#1616e6"/>
<rect x="710" y="287.8" width="4.2" height="4.2" fill="#1616e6"/>
<line x1="703.50" y1="286.00" x2="706.50" y2="283.00" stroke="#1616e6" stroke-width="1" stroke-linecap="butt"/>
<line x1="708.00" y1="293.50" x2="711.00" y2="290.50" stroke="#1616e6" stroke-width="1" stroke-linecap="butt"/>
<text x="680.00" y="276.00" fill="#121274" stroke="#121274" stroke-width="0.2" font-size="14" text-anchor="start" >LED1</text>
<text x="680.80" y="320.30" fill="#121274" stroke="#121274" stroke-width="0.2" font-size="14" text-anchor="start" >TEST</text>
<line x1="749.98" y1="296.67" x2="749.98" y2="313.97" stroke="#8a0c0c" stroke-width="2" stroke-linecap="butt"/>
<line x1="732.48" y1="313.97" x2="767.48" y2="313.97" stroke="#8a0c0c" stroke-width="2" stroke-linecap="butt"/>
<line x1="737.98" y1="319.02" x2="761.98" y2="319.02" stroke="#8a0c0c" stroke-width="2" stroke-linecap="butt"/>
<line x1="743.48" y1="324.07" x2="756.48" y2="324.07" stroke="#8a0c0c" stroke-width="2" stroke-linecap="butt"/>
<line x1="747.68" y1="329.12" x2="752.28" y2="329.12" stroke="#8a0c0c" stroke-width="2" stroke-linecap="butt"/>
<line x1="784.07" y1="109.17" x2="800.00" y2="109.17" stroke="#000000" stroke-width="2" stroke-linecap="butt"/>
<line x1="835.00" y1="109.17" x2="852.25" y2="109.17" stroke="#000000" stroke-width="2" stroke-linecap="butt"/>
<line x1="800.00" y1="109.17" x2="806.00" y2="109.17" stroke="#1616e6" stroke-width="2" stroke-linecap="butt"/>
<line x1="829.00" y1="109.17" x2="835.00" y2="109.17" stroke="#1616e6" stroke-width="2" stroke-linecap="butt"/>
<polyline points="806.00,109.17 807.92,105.77 811.75,112.57 815.58,105.77 819.42,112.57 823.25,105.77 827.08,112.57 829.00,109.17" stroke="#1616e6" stroke-width="2" fill="none" stroke-linejoin="round"/>
<text x="780.60" y="104.60" fill="#141400" stroke="#141400" stroke-width="0.2" font-size="14" text-anchor="start" >1</text>
<text x="848.80" y="104.60" fill="#141400" stroke="#141400" stroke-width="0.2" font-size="14" text-anchor="start" >3</text>
<text x="801.40" y="85.20" fill="#121274" stroke="#121274" stroke-width="0.2" font-size="14" text-anchor="start" >R2</text>
<text x="801.40" y="102.20" fill="#121274" stroke="#121274" stroke-width="0.2" font-size="14" text-anchor="start" >5K</text>
<polygon points="813.36,123.30 818.16,113.20 822.96,123.30" stroke="#1616e6" stroke-width="1" fill="#1616e6" stroke-linejoin="miter"/>
<line x1="818.16" y1="123.00" x2="818.16" y2="143.00" stroke="#000000" stroke-width="2" stroke-linecap="butt"/>
<text transform="translate(814.30,147.00) rotate(-90)" fill="#141400" stroke="#141400" stroke-width="0.2" font-size="14">2</text>
<line x1="852.25" y1="109.17" x2="890.34" y2="109.17" stroke="#000080" stroke-width="2" stroke-linecap="butt"/>
<line x1="889.00" y1="109.17" x2="892.00" y2="109.17" stroke="#8a0c0c" stroke-width="2" stroke-linecap="butt"/>
<polygon points="893.00,104.47 901.60,109.17 893.00,113.87" stroke="#8a0c0c" stroke-width="2" fill="none" stroke-linejoin="miter"/>
<text x="907.50" y="113.80" fill="#8a0c0c" stroke="#8a0c0c" stroke-width="0.2" font-size="14" text-anchor="start" >+5V</text>
<circle cx="852.25" cy="109.17" r="3.3" fill="#000080"/>
<polyline points="784.07,109.17 784.07,160.31 903.39,160.31" stroke="#000080" stroke-width="2" fill="none" stroke-linejoin="miter"/>
<circle cx="869.30" cy="160.31" r="3.3" fill="#000080"/>
<line x1="903.39" y1="159.31" x2="903.39" y2="177.31" stroke="#8a0c0c" stroke-width="2" stroke-linecap="butt"/>
<line x1="885.89" y1="177.31" x2="920.89" y2="177.31" stroke="#8a0c0c" stroke-width="2" stroke-linecap="butt"/>
<line x1="891.39" y1="182.36" x2="915.39" y2="182.36" stroke="#8a0c0c" stroke-width="2" stroke-linecap="butt"/>
<line x1="896.89" y1="187.41" x2="909.89" y2="187.41" stroke="#8a0c0c" stroke-width="2" stroke-linecap="butt"/>
<line x1="901.09" y1="192.46" x2="905.69" y2="192.46" stroke="#8a0c0c" stroke-width="2" stroke-linecap="butt"/>
<polyline points="818.16,143.00 818.16,245.53 886.34,245.53" stroke="#000080" stroke-width="2" fill="none" stroke-linejoin="miter"/>
<polyline points="852.25,109.17 852.25,228.49 886.34,228.49" stroke="#000080" stroke-width="2" fill="none" stroke-linejoin="miter"/>
<polyline points="869.30,160.31 869.30,279.62 886.34,279.62" stroke="#000080" stroke-width="2" fill="none" stroke-linejoin="miter"/>
<line x1="869.30" y1="211.44" x2="886.34" y2="211.44" stroke="#000080" stroke-width="2" stroke-linecap="butt"/>
<circle cx="869.30" cy="211.44" r="3.3" fill="#000080"/>
<line x1="818.16" y1="262.57" x2="886.34" y2="262.57" stroke="#000080" stroke-width="2" stroke-linecap="butt"/>
<text x="937.48" y="190.80" fill="#121274" stroke="#121274" stroke-width="0.2" font-size="14" text-anchor="start" >J1</text>
<text x="937.48" y="497.50" fill="#121274" stroke="#121274" stroke-width="0.2" font-size="14" text-anchor="start" >LCD</text>
<polyline points="883.3,218.6 885.3,221.0 887.3,218.6 889.3,221.0 891.3,218.6 893.3,221.0 895.3,218.6 897.3,221.0 899.3,218.6 901.3,221.0 903.3,218.6 905.3,221.0 907.3,218.6 909.3,221.0 911.3,218.6 913.3,221.0 915.3,218.6 917.3,221.0 919.3,218.6 921.3,221.0 923.3,218.6 925.3,221.0 927.3,218.6 929.3,221.0 931.3,218.6 933.3,221.0 935.3,218.6" stroke="#dcb4a8" stroke-width="1" fill="none" opacity="0.9"/>
<polyline points="883.3,286.5 885.3,288.9 887.3,286.5 889.3,288.9 891.3,286.5 893.3,288.9 895.3,286.5 897.3,288.9 899.3,286.5 901.3,288.9 903.3,286.5 905.3,288.9 907.3,286.5 909.3,288.9 911.3,286.5 913.3,288.9 915.3,286.5 917.3,288.9 919.3,286.5 921.3,288.9 923.3,286.5 925.3,288.9 927.3,286.5 929.3,288.9 931.3,286.5 933.3,288.9 935.3,286.5" stroke="#dcb4a8" stroke-width="1" fill="none" opacity="0.9"/>
<line x1="886.34" y1="211.44" x2="937.78" y2="211.44" stroke="#000000" stroke-width="2" stroke-linecap="butt"/>
<text x="923.00" y="208.34" fill="#141400" stroke="#141400" stroke-width="0.2" font-size="14" text-anchor="end" >1</text>
<text x="949.20" y="216.24" fill="#141400" stroke="#141400" stroke-width="0.2" font-size="14.35" text-anchor="start" id="j_1">GND</text>
<line x1="886.34" y1="228.49" x2="937.78" y2="228.49" stroke="#000000" stroke-width="2" stroke-linecap="butt"/>
<text x="923.00" y="225.39" fill="#141400" stroke="#141400" stroke-width="0.2" font-size="14" text-anchor="end" >2</text>
<text x="949.20" y="233.29" fill="#141400" stroke="#141400" stroke-width="0.2" font-size="14.35" text-anchor="start" id="j_2">V+</text>
<line x1="886.34" y1="245.53" x2="937.78" y2="245.53" stroke="#000000" stroke-width="2" stroke-linecap="butt"/>
<text x="923.00" y="242.43" fill="#141400" stroke="#141400" stroke-width="0.2" font-size="14" text-anchor="end" >3</text>
<text x="949.20" y="250.33" fill="#141400" stroke="#141400" stroke-width="0.2" font-size="14.35" text-anchor="start" id="j_3">VO</text>
<line x1="886.34" y1="262.57" x2="937.78" y2="262.57" stroke="#000000" stroke-width="2" stroke-linecap="butt"/>
<polygon points="926.98,259.37 916.38,262.57 926.98,265.77" stroke="#3c3c3c" stroke-width="1" fill="#ffffff" stroke-linejoin="miter"/>
<polygon points="926.98,259.37 937.48,262.57 926.98,265.77" stroke="#3c3c3c" stroke-width="1" fill="#ffffff" stroke-linejoin="miter"/>
<text x="923.00" y="259.47" fill="#141400" stroke="#141400" stroke-width="0.2" font-size="14" text-anchor="end" >4</text>
<text x="949.20" y="267.37" fill="#141400" stroke="#141400" stroke-width="0.2" font-size="14.35" text-anchor="start" id="j_4">RS</text>
<line x1="886.34" y1="279.62" x2="937.78" y2="279.62" stroke="#000000" stroke-width="2" stroke-linecap="butt"/>
<polygon points="926.98,276.42 916.38,279.62 926.98,282.82" stroke="#3c3c3c" stroke-width="1" fill="#ffffff" stroke-linejoin="miter"/>
<polygon points="926.98,276.42 937.48,279.62 926.98,282.82" stroke="#3c3c3c" stroke-width="1" fill="#ffffff" stroke-linejoin="miter"/>
<text x="923.00" y="276.52" fill="#141400" stroke="#141400" stroke-width="0.2" font-size="14" text-anchor="end" >5</text>
<text x="949.20" y="284.42" fill="#141400" stroke="#141400" stroke-width="0.2" font-size="14.35" text-anchor="start" id="j_5">R/W</text>
<line x1="962.50" y1="272.42" x2="976.20" y2="272.42" stroke="#141400" stroke-width="1.7" stroke-linecap="butt"/>
<line x1="886.34" y1="296.67" x2="937.78" y2="296.67" stroke="#000000" stroke-width="2" stroke-linecap="butt"/>
<polygon points="926.98,293.47 937.48,296.67 926.98,299.87" stroke="#3c3c3c" stroke-width="1" fill="#ffffff" stroke-linejoin="miter"/>
<text x="923.00" y="293.57" fill="#141400" stroke="#141400" stroke-width="0.2" font-size="14" text-anchor="end" >6</text>
<text x="949.20" y="301.47" fill="#141400" stroke="#141400" stroke-width="0.2" font-size="14.35" text-anchor="start" id="j_6">E</text>
<line x1="886.34" y1="313.71" x2="937.78" y2="313.71" stroke="#000000" stroke-width="2" stroke-linecap="butt"/>
<polygon points="926.98,310.51 916.38,313.71 926.98,316.91" stroke="#3c3c3c" stroke-width="1" fill="#ffffff" stroke-linejoin="miter"/>
<polygon points="926.98,310.51 937.48,313.71 926.98,316.91" stroke="#3c3c3c" stroke-width="1" fill="#ffffff" stroke-linejoin="miter"/>
<text x="923.00" y="310.61" fill="#141400" stroke="#141400" stroke-width="0.2" font-size="14" text-anchor="end" >14</text>
<text x="949.20" y="318.51" fill="#141400" stroke="#141400" stroke-width="0.2" font-size="14.35" text-anchor="start" id="j_14">D7</text>
<line x1="886.34" y1="330.75" x2="937.78" y2="330.75" stroke="#000000" stroke-width="2" stroke-linecap="butt"/>
<polygon points="926.98,327.55 916.38,330.75 926.98,333.95" stroke="#3c3c3c" stroke-width="1" fill="#ffffff" stroke-linejoin="miter"/>
<polygon points="926.98,327.55 937.48,330.75 926.98,333.95" stroke="#3c3c3c" stroke-width="1" fill="#ffffff" stroke-linejoin="miter"/>
<text x="923.00" y="327.65" fill="#141400" stroke="#141400" stroke-width="0.2" font-size="14" text-anchor="end" >13</text>
<text x="949.20" y="335.55" fill="#141400" stroke="#141400" stroke-width="0.2" font-size="14.35" text-anchor="start" id="j_13">D6</text>
<line x1="886.34" y1="347.80" x2="937.78" y2="347.80" stroke="#000000" stroke-width="2" stroke-linecap="butt"/>
<polygon points="926.98,344.60 916.38,347.80 926.98,351.00" stroke="#3c3c3c" stroke-width="1" fill="#ffffff" stroke-linejoin="miter"/>
<polygon points="926.98,344.60 937.48,347.80 926.98,351.00" stroke="#3c3c3c" stroke-width="1" fill="#ffffff" stroke-linejoin="miter"/>
<text x="923.00" y="344.70" fill="#141400" stroke="#141400" stroke-width="0.2" font-size="14" text-anchor="end" >12</text>
<text x="949.20" y="352.60" fill="#141400" stroke="#141400" stroke-width="0.2" font-size="14.35" text-anchor="start" id="j_12">D5</text>
<line x1="886.34" y1="364.85" x2="937.78" y2="364.85" stroke="#000000" stroke-width="2" stroke-linecap="butt"/>
<polygon points="926.98,361.65 916.38,364.85 926.98,368.05" stroke="#3c3c3c" stroke-width="1" fill="#ffffff" stroke-linejoin="miter"/>
<polygon points="926.98,361.65 937.48,364.85 926.98,368.05" stroke="#3c3c3c" stroke-width="1" fill="#ffffff" stroke-linejoin="miter"/>
<text x="923.00" y="361.75" fill="#141400" stroke="#141400" stroke-width="0.2" font-size="14" text-anchor="end" >11</text>
<text x="949.20" y="369.65" fill="#141400" stroke="#141400" stroke-width="0.2" font-size="14.35" text-anchor="start" id="j_11">D4</text>
<line x1="886.34" y1="381.89" x2="937.78" y2="381.89" stroke="#000000" stroke-width="2" stroke-linecap="butt"/>
<polygon points="926.98,378.69 916.38,381.89 926.98,385.09" stroke="#3c3c3c" stroke-width="1" fill="#ffffff" stroke-linejoin="miter"/>
<polygon points="926.98,378.69 937.48,381.89 926.98,385.09" stroke="#3c3c3c" stroke-width="1" fill="#ffffff" stroke-linejoin="miter"/>
<text x="923.00" y="378.79" fill="#141400" stroke="#141400" stroke-width="0.2" font-size="14" text-anchor="end" >10</text>
<text x="949.20" y="386.69" fill="#141400" stroke="#141400" stroke-width="0.2" font-size="14.35" text-anchor="start" id="j_10">D3</text>
<line x1="886.34" y1="398.94" x2="937.78" y2="398.94" stroke="#000000" stroke-width="2" stroke-linecap="butt"/>
<polygon points="926.98,395.74 916.38,398.94 926.98,402.14" stroke="#3c3c3c" stroke-width="1" fill="#ffffff" stroke-linejoin="miter"/>
<polygon points="926.98,395.74 937.48,398.94 926.98,402.14" stroke="#3c3c3c" stroke-width="1" fill="#ffffff" stroke-linejoin="miter"/>
<text x="923.00" y="395.84" fill="#141400" stroke="#141400" stroke-width="0.2" font-size="14" text-anchor="end" >9</text>
<text x="949.20" y="403.74" fill="#141400" stroke="#141400" stroke-width="0.2" font-size="14.35" text-anchor="start" id="j_9">D2</text>
<line x1="886.34" y1="415.98" x2="937.78" y2="415.98" stroke="#000000" stroke-width="2" stroke-linecap="butt"/>
<polygon points="926.98,412.78 916.38,415.98 926.98,419.18" stroke="#3c3c3c" stroke-width="1" fill="#ffffff" stroke-linejoin="miter"/>
<polygon points="926.98,412.78 937.48,415.98 926.98,419.18" stroke="#3c3c3c" stroke-width="1" fill="#ffffff" stroke-linejoin="miter"/>
<text x="923.00" y="412.88" fill="#141400" stroke="#141400" stroke-width="0.2" font-size="14" text-anchor="end" >8</text>
<text x="949.20" y="420.78" fill="#141400" stroke="#141400" stroke-width="0.2" font-size="14.35" text-anchor="start" id="j_8">D1</text>
<line x1="886.34" y1="433.03" x2="937.78" y2="433.03" stroke="#000000" stroke-width="2" stroke-linecap="butt"/>
<polygon points="926.98,429.83 916.38,433.03 926.98,436.23" stroke="#3c3c3c" stroke-width="1" fill="#ffffff" stroke-linejoin="miter"/>
<polygon points="926.98,429.83 937.48,433.03 926.98,436.23" stroke="#3c3c3c" stroke-width="1" fill="#ffffff" stroke-linejoin="miter"/>
<text x="923.00" y="429.93" fill="#141400" stroke="#141400" stroke-width="0.2" font-size="14" text-anchor="end" >7</text>
<text x="949.20" y="437.83" fill="#141400" stroke="#141400" stroke-width="0.2" font-size="14.35" text-anchor="start" id="j_7">D0</text>
<line x1="886.34" y1="450.07" x2="937.78" y2="450.07" stroke="#000000" stroke-width="2" stroke-linecap="butt"/>
<text x="923.00" y="446.97" fill="#141400" stroke="#141400" stroke-width="0.2" font-size="14" text-anchor="end" >15</text>
<text x="949.20" y="454.87" fill="#141400" stroke="#141400" stroke-width="0.2" font-size="14.35" text-anchor="start" id="j_15">LED(+)</text>
<line x1="886.34" y1="467.12" x2="937.78" y2="467.12" stroke="#000000" stroke-width="2" stroke-linecap="butt"/>
<text x="923.00" y="464.02" fill="#141400" stroke="#141400" stroke-width="0.2" font-size="14" text-anchor="end" >16</text>
<text x="949.20" y="471.92" fill="#141400" stroke="#141400" stroke-width="0.2" font-size="14.35" text-anchor="start" id="j_16">LED(-)</text>
<line x1="879.84" y1="375.39" x2="892.84" y2="388.39" stroke="#c46868" stroke-width="1" stroke-linecap="butt"/>
<line x1="879.84" y1="388.39" x2="892.84" y2="375.39" stroke="#c46868" stroke-width="1" stroke-linecap="butt"/>
<line x1="879.84" y1="392.44" x2="892.84" y2="405.44" stroke="#c46868" stroke-width="1" stroke-linecap="butt"/>
<line x1="879.84" y1="405.44" x2="892.84" y2="392.44" stroke="#c46868" stroke-width="1" stroke-linecap="butt"/>
<line x1="879.84" y1="409.48" x2="892.84" y2="422.48" stroke="#c46868" stroke-width="1" stroke-linecap="butt"/>
<line x1="879.84" y1="422.48" x2="892.84" y2="409.48" stroke="#c46868" stroke-width="1" stroke-linecap="butt"/>
<line x1="879.84" y1="426.53" x2="892.84" y2="439.53" stroke="#c46868" stroke-width="1" stroke-linecap="butt"/>
<line x1="879.84" y1="439.53" x2="892.84" y2="426.53" stroke="#c46868" stroke-width="1" stroke-linecap="butt"/>
<polyline points="766.0,273.7 768.0,276.1 770.0,273.7 772.0,276.1 774.0,273.7 776.0,276.1 778.0,273.7 780.0,276.1 782.0,273.7 784.0,276.1 786.0,273.7 788.0,276.1 790.0,273.7 792.0,276.1 794.0,273.7 796.0,276.1 798.0,273.7 800.0,276.1 802.0,273.7 804.0,276.1 806.0,273.7 808.0,276.1 810.0,273.7 812.0,276.1 814.0,273.7 816.0,276.1 818.0,273.7" stroke="#dcb4a8" stroke-width="1" fill="none" opacity="0.9"/>
<polygon points="767.03,262.57 775.53,254.17 809.66,254.17 818.16,262.57 809.66,270.97 775.53,270.97" stroke="#7c6614" stroke-width="0.9" fill="#fdf47a" stroke-linejoin="miter"/>
<text x="792.60" y="267.37" fill="#6a3e0c" stroke="#6a3e0c" stroke-width="0.2" font-size="14" text-anchor="middle" >RS</text>
<polyline points="834.2,306.5 836.2,308.9 838.2,306.5 840.2,308.9 842.2,306.5 844.2,308.9 846.2,306.5 848.2,308.9 850.2,306.5 852.2,308.9 854.2,306.5 856.2,308.9 858.2,306.5 860.2,308.9 862.2,306.5 864.2,308.9 866.2,306.5 868.2,308.9 870.2,306.5 872.2,308.9 874.2,306.5 876.2,308.9 878.2,306.5 880.2,308.9 882.2,306.5 884.2,308.9 886.2,306.5" stroke="#dcb4a8" stroke-width="1" fill="none" opacity="0.9"/>
<polyline points="834.2,323.5 836.2,325.9 838.2,323.5 840.2,325.9 842.2,323.5 844.2,325.9 846.2,323.5 848.2,325.9 850.2,323.5 852.2,325.9 854.2,323.5 856.2,325.9 858.2,323.5 860.2,325.9 862.2,323.5 864.2,325.9 866.2,323.5 868.2,325.9 870.2,323.5 872.2,325.9 874.2,323.5 876.2,325.9 878.2,323.5 880.2,325.9 882.2,323.5 884.2,325.9 886.2,323.5" stroke="#dcb4a8" stroke-width="1" fill="none" opacity="0.9"/>
<polyline points="834.2,340.6 836.2,342.9 838.2,340.6 840.2,342.9 842.2,340.6 844.2,342.9 846.2,340.6 848.2,342.9 850.2,340.6 852.2,342.9 854.2,340.6 856.2,342.9 858.2,340.6 860.2,342.9 862.2,340.6 864.2,342.9 866.2,340.6 868.2,342.9 870.2,340.6 872.2,342.9 874.2,340.6 876.2,342.9 878.2,340.6 880.2,342.9 882.2,340.6 884.2,342.9 886.2,340.6" stroke="#dcb4a8" stroke-width="1" fill="none" opacity="0.9"/>
<polyline points="834.2,357.6 836.2,360.0 838.2,357.6 840.2,360.0 842.2,357.6 844.2,360.0 846.2,357.6 848.2,360.0 850.2,357.6 852.2,360.0 854.2,357.6 856.2,360.0 858.2,357.6 860.2,360.0 862.2,357.6 864.2,360.0 866.2,357.6 868.2,360.0 870.2,357.6 872.2,360.0 874.2,357.6 876.2,360.0 878.2,357.6 880.2,360.0 882.2,357.6 884.2,360.0 886.2,357.6" stroke="#dcb4a8" stroke-width="1" fill="none" opacity="0.9"/>
<polyline points="834.2,374.7 836.2,377.1 838.2,374.7 840.2,377.1 842.2,374.7 844.2,377.1 846.2,374.7 848.2,377.1 850.2,374.7 852.2,377.1 854.2,374.7 856.2,377.1 858.2,374.7 860.2,377.1 862.2,374.7 864.2,377.1 866.2,374.7 868.2,377.1 870.2,374.7 872.2,377.1 874.2,374.7 876.2,377.1 878.2,374.7 880.2,377.1 882.2,374.7 884.2,377.1 886.2,374.7" stroke="#dcb4a8" stroke-width="1" fill="none" opacity="0.9"/>
<polygon points="835.21,296.67 843.71,288.27 877.84,288.27 886.34,296.67 877.84,305.07 843.71,305.07" stroke="#7c6614" stroke-width="0.9" fill="#fdf47a" stroke-linejoin="miter"/>
<text x="860.78" y="301.47" fill="#6a3e0c" stroke="#6a3e0c" stroke-width="0.2" font-size="14" text-anchor="middle" >E</text>
<polygon points="835.21,313.71 843.71,305.31 877.84,305.31 886.34,313.71 877.84,322.11 843.71,322.11" stroke="#7c6614" stroke-width="0.9" fill="#fdf47a" stroke-linejoin="miter"/>
<text x="860.78" y="318.51" fill="#6a3e0c" stroke="#6a3e0c" stroke-width="0.2" font-size="14" text-anchor="middle" >D7</text>
<polygon points="835.21,330.75 843.71,322.35 877.84,322.35 886.34,330.75 877.84,339.15 843.71,339.15" stroke="#7c6614" stroke-width="0.9" fill="#fdf47a" stroke-linejoin="miter"/>
<text x="860.78" y="335.55" fill="#6a3e0c" stroke="#6a3e0c" stroke-width="0.2" font-size="14" text-anchor="middle" >D6</text>
<polygon points="835.21,347.80 843.71,339.40 877.84,339.40 886.34,347.80 877.84,356.20 843.71,356.20" stroke="#7c6614" stroke-width="0.9" fill="#fdf47a" stroke-linejoin="miter"/>
<text x="860.78" y="352.60" fill="#6a3e0c" stroke="#6a3e0c" stroke-width="0.2" font-size="14" text-anchor="middle" >D5</text>
<polygon points="835.21,364.85 843.71,356.45 877.84,356.45 886.34,364.85 877.84,373.25 843.71,373.25" stroke="#7c6614" stroke-width="0.9" fill="#fdf47a" stroke-linejoin="miter"/>
<text x="860.78" y="369.65" fill="#6a3e0c" stroke="#6a3e0c" stroke-width="0.2" font-size="14" text-anchor="middle" >D4</text>
<line x1="886.34" y1="450.07" x2="881.34" y2="450.07" stroke="#8a0c0c" stroke-width="2" stroke-linecap="butt"/>
<polygon points="879.80,445.37 871.20,450.07 879.80,454.77" stroke="#8a0c0c" stroke-width="2" fill="none" stroke-linejoin="miter"/>
<text x="841.00" y="454.50" fill="#8a0c0c" stroke="#8a0c0c" stroke-width="0.2" font-size="14" text-anchor="start" >+5V</text>
<line x1="886.34" y1="466.12" x2="886.34" y2="484.50" stroke="#000000" stroke-width="2" stroke-linecap="butt"/>
<line x1="886.34" y1="524.00" x2="886.34" y2="536.00" stroke="#000000" stroke-width="2" stroke-linecap="butt"/>
<line x1="886.34" y1="484.50" x2="886.34" y2="490.50" stroke="#1616e6" stroke-width="2" stroke-linecap="butt"/>
<line x1="886.34" y1="511.00" x2="886.34" y2="524.00" stroke="#1616e6" stroke-width="2" stroke-linecap="butt"/>
<polyline points="886.34,490.50 889.14,492.21 883.54,495.62 889.14,499.04 883.54,502.46 889.14,505.88 883.54,509.29 886.34,511.00" stroke="#1616e6" stroke-width="2" fill="none" stroke-linejoin="round"/>
<line x1="886.34" y1="536.00" x2="886.34" y2="552.60" stroke="#8a0c0c" stroke-width="2" stroke-linecap="butt"/>
<line x1="868.84" y1="552.60" x2="903.84" y2="552.60" stroke="#8a0c0c" stroke-width="2" stroke-linecap="butt"/>
<line x1="874.34" y1="557.65" x2="898.34" y2="557.65" stroke="#8a0c0c" stroke-width="2" stroke-linecap="butt"/>
<line x1="879.84" y1="562.70" x2="892.84" y2="562.70" stroke="#8a0c0c" stroke-width="2" stroke-linecap="butt"/>
<line x1="884.04" y1="567.75" x2="888.64" y2="567.75" stroke="#8a0c0c" stroke-width="2" stroke-linecap="butt"/>
<text x="891.00" y="495.80" fill="#121274" stroke="#121274" stroke-width="0.2" font-size="14" text-anchor="start" >R4</text>
<text x="886.50" y="531.50" fill="#121274" stroke="#121274" stroke-width="0.2" font-size="14" text-anchor="start" >56 2W</text>
<polyline points="169.4,425.3 171.4,427.7 173.4,425.3 175.4,427.7 177.4,425.3 179.4,427.7 181.4,425.3 183.4,427.7 185.4,425.3 187.4,427.7 189.4,425.3 191.4,427.7 193.4,425.3 195.4,427.7 197.4,425.3 199.4,427.7 201.4,425.3 203.4,427.7 205.4,425.3 207.4,427.7 209.4,425.3 211.4,427.7 213.4,425.3 215.4,427.7 217.4,425.3 219.4,427.7 221.4,425.3 223.4,427.7 225.4,425.3 227.4,427.7 229.4,425.3 231.4,427.7 233.4,425.3 235.4,427.7 237.4,425.3 239.4,427.7 241.4,425.3 243.4,427.7 245.4,425.3 247.4,427.7 249.4,425.3 251.4,427.7 253.4,425.3" stroke="#dcb4a8" stroke-width="1" fill="none" opacity="0.9"/>
<polyline points="169.4,442.3 171.4,444.7 173.4,442.3 175.4,444.7 177.4,442.3 179.4,444.7 181.4,442.3 183.4,444.7 185.4,442.3 187.4,444.7 189.4,442.3 191.4,444.7 193.4,442.3 195.4,444.7 197.4,442.3 199.4,444.7 201.4,442.3 203.4,444.7 205.4,442.3 207.4,444.7 209.4,442.3 211.4,444.7 213.4,442.3 215.4,444.7 217.4,442.3 219.4,444.7 221.4,442.3 223.4,444.7 225.4,442.3 227.4,444.7 229.4,442.3 231.4,444.7 233.4,442.3 235.4,444.7 237.4,442.3 239.4,444.7 241.4,442.3 243.4,444.7 245.4,442.3 247.4,444.7 249.4,442.3 251.4,444.7 253.4,442.3" stroke="#dcb4a8" stroke-width="1" fill="none" opacity="0.9"/>
<polyline points="169.4,459.4 171.4,461.8 173.4,459.4 175.4,461.8 177.4,459.4 179.4,461.8 181.4,459.4 183.4,461.8 185.4,459.4 187.4,461.8 189.4,459.4 191.4,461.8 193.4,459.4 195.4,461.8 197.4,459.4 199.4,461.8 201.4,459.4 203.4,461.8 205.4,459.4 207.4,461.8 209.4,459.4 211.4,461.8 213.4,459.4 215.4,461.8 217.4,459.4 219.4,461.8 221.4,459.4 223.4,461.8 225.4,459.4 227.4,461.8 229.4,459.4 231.4,461.8 233.4,459.4 235.4,461.8 237.4,459.4 239.4,461.8 241.4,459.4 243.4,461.8 245.4,459.4 247.4,461.8 249.4,459.4 251.4,461.8 253.4,459.4" stroke="#dcb4a8" stroke-width="1" fill="none" opacity="0.9"/>
<polyline points="169.4,476.4 171.4,478.8 173.4,476.4 175.4,478.8 177.4,476.4 179.4,478.8 181.4,476.4 183.4,478.8 185.4,476.4 187.4,478.8 189.4,476.4 191.4,478.8 193.4,476.4 195.4,478.8 197.4,476.4 199.4,478.8 201.4,476.4 203.4,478.8 205.4,476.4 207.4,478.8 209.4,476.4 211.4,478.8 213.4,476.4 215.4,478.8 217.4,476.4 219.4,478.8 221.4,476.4 223.4,478.8 225.4,476.4 227.4,478.8 229.4,476.4 231.4,478.8 233.4,476.4 235.4,478.8 237.4,476.4 239.4,478.8 241.4,476.4 243.4,478.8 245.4,476.4 247.4,478.8 249.4,476.4 251.4,478.8 253.4,476.4" stroke="#dcb4a8" stroke-width="1" fill="none" opacity="0.9"/>
<polyline points="169.4,493.5 171.4,495.9 173.4,493.5 175.4,495.9 177.4,493.5 179.4,495.9 181.4,493.5 183.4,495.9 185.4,493.5 187.4,495.9 189.4,493.5 191.4,495.9 193.4,493.5 195.4,495.9 197.4,493.5 199.4,495.9 201.4,493.5 203.4,495.9 205.4,493.5 207.4,495.9 209.4,493.5 211.4,495.9 213.4,493.5 215.4,495.9 217.4,493.5 219.4,495.9 221.4,493.5 223.4,495.9 225.4,493.5 227.4,495.9 229.4,493.5 231.4,495.9 233.4,493.5 235.4,495.9 237.4,493.5 239.4,495.9 241.4,493.5 243.4,495.9 245.4,493.5 247.4,495.9 249.4,493.5 251.4,495.9 253.4,493.5" stroke="#dcb4a8" stroke-width="1" fill="none" opacity="0.9"/>
<polyline points="169.4,510.5 171.4,512.9 173.4,510.5 175.4,512.9 177.4,510.5 179.4,512.9 181.4,510.5 183.4,512.9 185.4,510.5 187.4,512.9 189.4,510.5 191.4,512.9 193.4,510.5 195.4,512.9 197.4,510.5 199.4,512.9 201.4,510.5 203.4,512.9 205.4,510.5 207.4,512.9 209.4,510.5 211.4,512.9 213.4,510.5 215.4,512.9 217.4,510.5 219.4,512.9 221.4,510.5 223.4,512.9 225.4,510.5 227.4,512.9 229.4,510.5 231.4,512.9 233.4,510.5 235.4,512.9 237.4,510.5 239.4,512.9 241.4,510.5 243.4,512.9 245.4,510.5 247.4,512.9 249.4,510.5 251.4,512.9 253.4,510.5" stroke="#dcb4a8" stroke-width="1" fill="none" opacity="0.9"/>
<polygon points="170.45,415.98 178.95,407.58 211.59,407.58 220.09,415.98 211.59,424.38 178.95,424.38" stroke="#7c6614" stroke-width="0.9" fill="#fdf47a" stroke-linejoin="miter"/>
<text x="195.27" y="420.78" fill="#6a3e0c" stroke="#6a3e0c" stroke-width="0.2" font-size="14" text-anchor="middle" >RS</text>
<polygon points="170.45,433.03 178.95,424.63 211.59,424.63 220.09,433.03 211.59,441.43 178.95,441.43" stroke="#7c6614" stroke-width="0.9" fill="#fdf47a" stroke-linejoin="miter"/>
<text x="195.27" y="437.83" fill="#6a3e0c" stroke="#6a3e0c" stroke-width="0.2" font-size="14" text-anchor="middle" >E</text>
<polygon points="170.45,450.07 178.95,441.67 211.59,441.67 220.09,450.07 211.59,458.47 178.95,458.47" stroke="#7c6614" stroke-width="0.9" fill="#fdf47a" stroke-linejoin="miter"/>
<text x="195.27" y="454.87" fill="#6a3e0c" stroke="#6a3e0c" stroke-width="0.2" font-size="14" text-anchor="middle" >D4</text>
<polygon points="170.45,467.12 178.95,458.72 211.59,458.72 220.09,467.12 211.59,475.52 178.95,475.52" stroke="#7c6614" stroke-width="0.9" fill="#fdf47a" stroke-linejoin="miter"/>
<text x="195.27" y="471.92" fill="#6a3e0c" stroke="#6a3e0c" stroke-width="0.2" font-size="14" text-anchor="middle" >D5</text>
<polygon points="170.45,484.16 178.95,475.76 211.59,475.76 220.09,484.16 211.59,492.56 178.95,492.56" stroke="#7c6614" stroke-width="0.9" fill="#fdf47a" stroke-linejoin="miter"/>
<text x="195.27" y="488.96" fill="#6a3e0c" stroke="#6a3e0c" stroke-width="0.2" font-size="14" text-anchor="middle" >D6</text>
<polygon points="170.45,501.21 178.95,492.81 211.59,492.81 220.09,501.21 211.59,509.61 178.95,509.61" stroke="#7c6614" stroke-width="0.9" fill="#fdf47a" stroke-linejoin="miter"/>
<text x="195.27" y="506.01" fill="#6a3e0c" stroke="#6a3e0c" stroke-width="0.2" font-size="14" text-anchor="middle" >D7</text>
<rect x="0" y="0" width="1024" height="9.2" fill="#ededed"/>
<rect x="0" y="8.8" width="1024" height="1.2" fill="#b4b4b4"/>
<rect x="0" y="0" width="58.5" height="7.4" fill="#ffffff"/>
<line x1="0" y1="6.8" x2="58" y2="6.8" stroke="#c4c4c4" stroke-width="0.8" stroke-dasharray="1,1"/>
<line x1="58.5" y1="0" x2="58.5" y2="7" stroke="#c8c8c8" stroke-width="1"/>
<text class="sans" x="0.6" y="2.9" font-size="7.25" fill="#2a2a2a" stroke="#2a2a2a" stroke-width="0.25" style="font-family:'Liberation Sans',sans-serif">16F877A.SchDoc</text>
<defs><linearGradient id="thumb" x1="0" y1="0" x2="0" y2="1"><stop offset="0" stop-color="#f6f6f6"/><stop offset="0.45" stop-color="#dedede"/><stop offset="1" stop-color="#bebebe"/></linearGradient></defs>
<rect x="0" y="603.3" width="1024" height="14.7" fill="#ebebeb"/>
<rect x="0" y="603.3" width="1024" height="1" fill="#e0e0e0"/>
<rect x="0" y="614.3" width="1024" height="3.7" fill="#f3f3f3"/>
<rect x="0" y="613.8" width="1024" height="1" fill="#d2d2d2"/>
<rect x="138.5" y="604.3" width="416" height="9.2" rx="1.5" fill="url(#thumb)" stroke="#a4a4a4" stroke-width="0.9"/>
<line x1="345" y1="607" x2="345" y2="611" stroke="#6a6a6a" stroke-width="0.7"/>
<line x1="347" y1="607" x2="347" y2="611" stroke="#6a6a6a" stroke-width="0.7"/>
<line x1="349" y1="607" x2="349" y2="611" stroke="#6a6a6a" stroke-width="0.7"/>
<rect x="0" y="614.8" width="10" height="3.2" fill="#ffffff"/>
<rect x="10" y="613.8" width="0.8" height="2" fill="#999"/>
<rect x="968" y="614.8" width="56" height="3.2" fill="#f8f8f8"/>
<rect x="980" y="615.5" width="3" height="2.5" fill="#444a66"/>
<rect x="994" y="616" width="2" height="2" fill="#777"/>
<rect x="1012" y="615" width="1" height="3" fill="#bbb"/>
</svg>
</body></html>
